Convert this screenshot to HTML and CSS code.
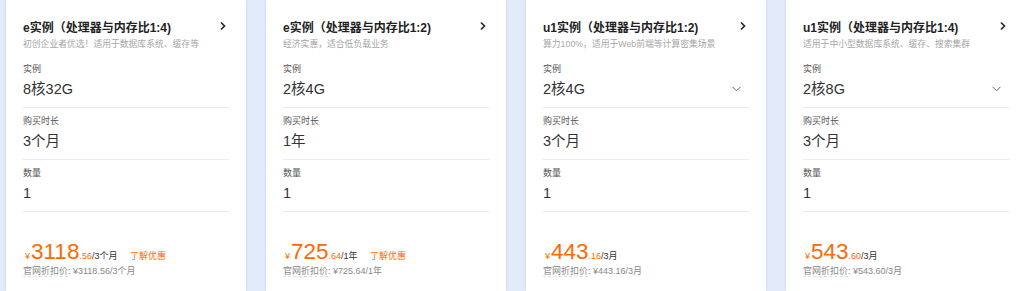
FILE: index.html
```html
<!DOCTYPE html>
<html lang="zh-CN">
<head>
    <meta charset="UTF-8">
    <meta name="viewport" content="width=device-width, initial-scale=1.0">
    <title>云服务器实例</title>
    <link rel="stylesheet" href="styles.css">
</head>
<body>
    <div class="cards">
        <div class="card">
            <div class="card-title">
                <span>e实例（处理器与内存比1:4)</span>
                <svg class="arrow" width="8" height="10" viewBox="0 0 8 10"><path d="M2 1.5 L5.5 5 L2 8.5" fill="none" stroke="#222" stroke-width="1.6"/></svg>
            </div>
            <div class="card-desc">初创企业者优选！适用于数据库系统、缓存等</div>
            <div class="row">
                <div class="label">实例</div>
                <div class="value">8核32G</div>
            </div>
            <div class="row">
                <div class="label">购买时长</div>
                <div class="value">3个月</div>
            </div>
            <div class="row">
                <div class="label">数量</div>
                <div class="value">1</div>
            </div>
            <div class="price">
                <span class="yen">¥</span><span class="num">3118</span><span class="dec">.56</span><span class="unit">/3个月</span>
                <a class="promo">了解优惠</a>
            </div>
            <div class="origin"><span class="dotted">官网折扣价</span>: ¥3118.56/3个月</div>
        </div>

        <div class="card">
            <div class="card-title">
                <span>e实例（处理器与内存比1:2)</span>
                <svg class="arrow" width="8" height="10" viewBox="0 0 8 10"><path d="M2 1.5 L5.5 5 L2 8.5" fill="none" stroke="#222" stroke-width="1.6"/></svg>
            </div>
            <div class="card-desc">经济实惠，适合低负载业务</div>
            <div class="row">
                <div class="label">实例</div>
                <div class="value">2核4G</div>
            </div>
            <div class="row">
                <div class="label">购买时长</div>
                <div class="value">1年</div>
            </div>
            <div class="row">
                <div class="label">数量</div>
                <div class="value">1</div>
            </div>
            <div class="price">
                <span class="yen">¥</span><span class="num">725</span><span class="dec">.64</span><span class="unit">/1年</span>
                <a class="promo">了解优惠</a>
            </div>
            <div class="origin"><span class="dotted">官网折扣价</span>: ¥725.64/1年</div>
        </div>

        <div class="card">
            <div class="card-title">
                <span>u1实例（处理器与内存比1:2)</span>
                <svg class="arrow" width="8" height="10" viewBox="0 0 8 10"><path d="M2 1.5 L5.5 5 L2 8.5" fill="none" stroke="#222" stroke-width="1.6"/></svg>
            </div>
            <div class="card-desc">算力100%，适用于Web前端等计算密集场景</div>
            <div class="row">
                <div class="label">实例</div>
                <div class="value select">2核4G
                    <svg class="drop" width="9" height="6" viewBox="0 0 9 6"><path d="M0.5 0.8 L4.5 4.8 L8.5 0.8" fill="none" stroke="#666" stroke-width="1"/></svg>
                </div>
            </div>
            <div class="row">
                <div class="label">购买时长</div>
                <div class="value">3个月</div>
            </div>
            <div class="row">
                <div class="label">数量</div>
                <div class="value">1</div>
            </div>
            <div class="price">
                <span class="yen">¥</span><span class="num">443</span><span class="dec">.16</span><span class="unit">/3月</span>
            </div>
            <div class="origin"><span class="dotted">官网折扣价</span>: ¥443.16/3月</div>
        </div>

        <div class="card">
            <div class="card-title">
                <span>u1实例（处理器与内存比1:4)</span>
                <svg class="arrow" width="8" height="10" viewBox="0 0 8 10"><path d="M2 1.5 L5.5 5 L2 8.5" fill="none" stroke="#222" stroke-width="1.6"/></svg>
            </div>
            <div class="card-desc">适用于中小型数据库系统、缓存、搜索集群</div>
            <div class="row">
                <div class="label">实例</div>
                <div class="value select">2核8G
                    <svg class="drop" width="9" height="6" viewBox="0 0 9 6"><path d="M0.5 0.8 L4.5 4.8 L8.5 0.8" fill="none" stroke="#666" stroke-width="1"/></svg>
                </div>
            </div>
            <div class="row">
                <div class="label">购买时长</div>
                <div class="value">3个月</div>
            </div>
            <div class="row">
                <div class="label">数量</div>
                <div class="value">1</div>
            </div>
            <div class="price">
                <span class="yen">¥</span><span class="num">543</span><span class="dec">.60</span><span class="unit">/3月</span>
            </div>
            <div class="origin"><span class="dotted">官网折扣价</span>: ¥543.60/3月</div>
        </div>
    </div>
</body>
</html>
```

FILE: styles.css
```css
body {
    margin: 0;
    height: 291px;
    overflow: hidden;
    background-color: #e3ebfb;
    font-family: "Liberation Sans", "Noto Sans CJK SC", sans-serif;
    color: #333;
}
.cards {
    display: flex;
    gap: 20px;
    padding-left: 6px;
    height: 100%;
}
.card {
    flex: 0 0 240px;
    box-sizing: border-box;
    padding: 17px 17px 0;
    background-color: #fff;
    box-shadow: 0 0 3px rgba(40, 80, 160, 0.15);
}
.card-title {
    display: flex;
    justify-content: space-between;
    align-items: center;
    height: 18px;
    font-size: 12px;
    font-weight: bold;
    color: #222;
}
.arrow {
    margin-right: 2px;
}
.card-desc {
    margin: 2px 0 5px;
    height: 14px;
    line-height: 14px;
    font-size: 8.8px;
    color: #a6a6a6;
    white-space: nowrap;
}
.row {
    padding: 6px 0 8px;
    border-bottom: 1px solid #ebebeb;
}
.label {
    height: 14px;
    line-height: 14px;
    font-size: 9px;
    color: #555;
}
.value {
    margin-top: 3px;
    height: 20px;
    line-height: 20px;
    font-size: 14.5px;
    color: #333;
}
.value.select {
    display: flex;
    justify-content: space-between;
    align-items: center;
}
.drop {
    margin-right: 8px;
}
.price {
    margin-top: 28px;
    height: 24px;
    line-height: 24px;
    color: #ff6a00;
    white-space: nowrap;
}
.yen {
    font-size: 9px;
    margin: 0 1px 0 2px;
}
.num {
    font-size: 22.5px;
}
.dec {
    font-size: 9px;
}
.unit {
    font-size: 9px;
    color: #333;
}
.promo {
    margin-left: 8px;
    font-size: 9px;
    color: #ff6a00;
}
.origin {
    height: 14px;
    line-height: 14px;
    font-size: 9px;
    color: #888;
}
.dotted {
    border-bottom: 1px dashed #ddd;
}
```
